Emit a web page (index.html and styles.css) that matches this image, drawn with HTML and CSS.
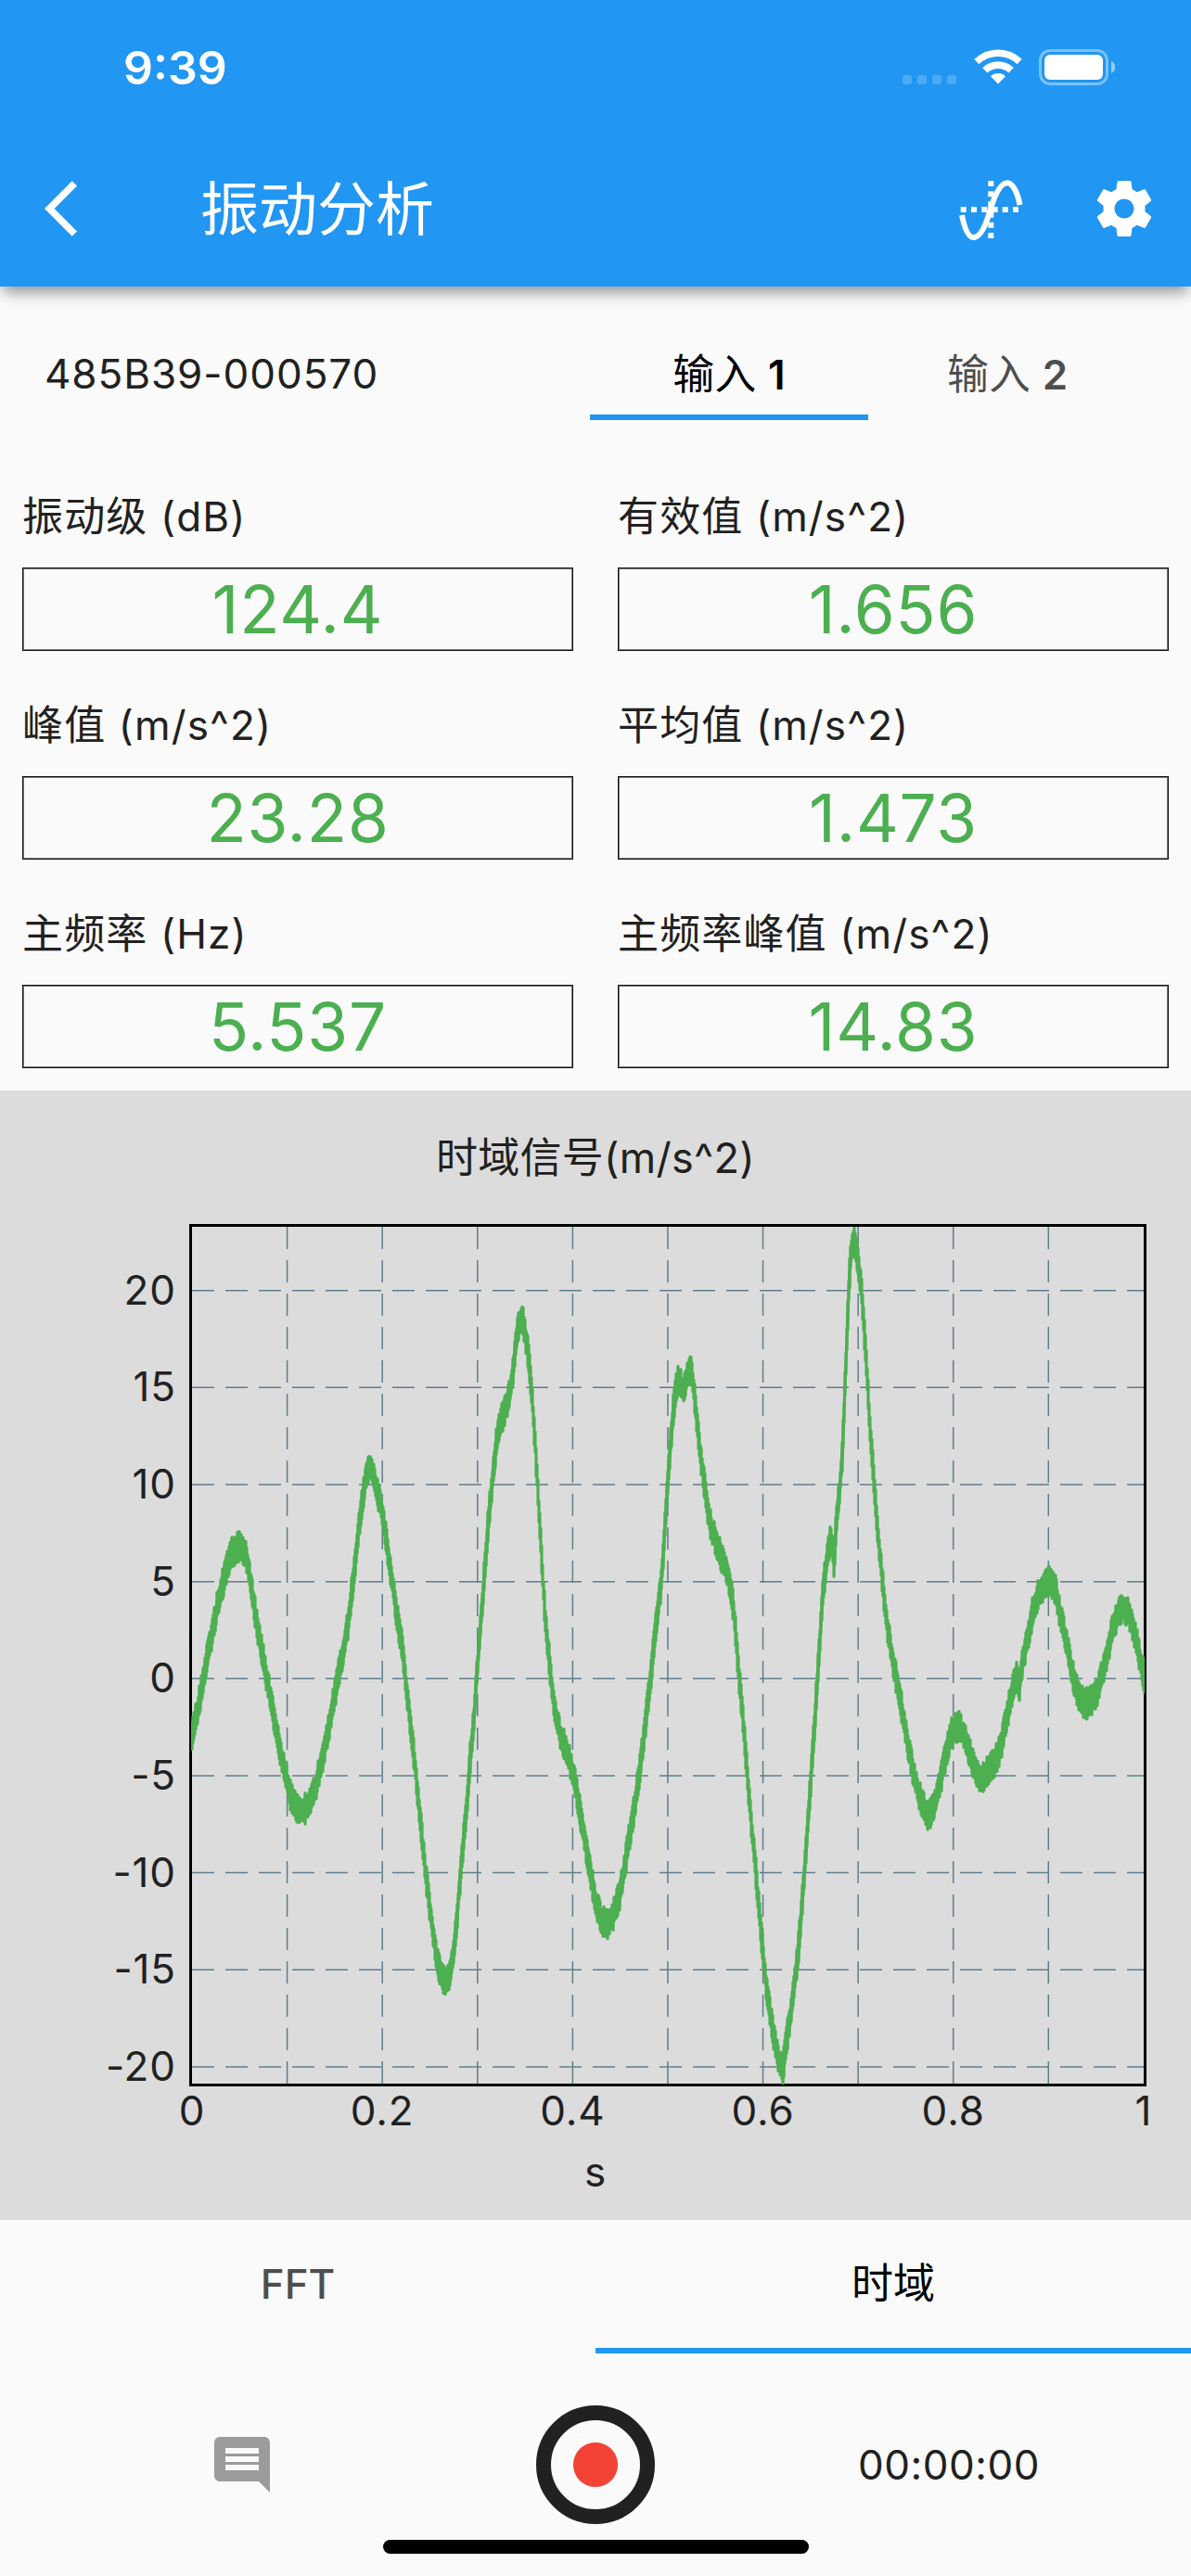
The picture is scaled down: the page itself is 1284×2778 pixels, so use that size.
FILE: index.html
```html
<!DOCTYPE html>
<html lang="zh-CN">
<head>
  <meta charset="UTF-8">
  <meta name="viewport" content="width=device-width, initial-scale=1.0">
  <title>振动分析</title>
  <link rel="stylesheet" href="styles.css">
</head>
<body>
  <header class="header">
    <div class="status-bar">
      <div class="clock">9:39</div>
      <div class="status-icons">
        <div class="signal"><i></i><i></i><i></i><i></i></div>
        <svg class="wifi" viewBox="0 0 52 38">
          <path d="M2.9 13.5A33.3 33.3 0 0 1 49.1 13.5" fill="none" stroke="#fff" stroke-width="7.4"/>
          <path d="M11.8 22.8A20.5 20.5 0 0 1 40.2 22.8" fill="none" stroke="#fff" stroke-width="7.6"/>
          <path d="M26 37.5L18 29.2A11.5 11.5 0 0 1 34 29.2Z" fill="#fff"/>
        </svg>
        <svg class="battery" viewBox="0 0 82 39">
          <rect x="1.5" y="1.5" width="72" height="36" rx="10.5" fill="none" stroke="#fff" stroke-opacity=".4" stroke-width="3"/>
          <rect x="6" y="6" width="63" height="27" rx="6" fill="#fff"/>
          <path d="M78 13a7 7 0 0 1 0 13z" fill="#fff" fill-opacity=".5"/>
        </svg>
      </div>
    </div>
    <div class="app-bar">
      <svg class="icon" viewBox="0 0 24 24"><path d="M11.67 3.87L9.9 2.1 0 12l9.9 9.9 1.77-1.77L3.54 12z"/></svg>
      <h1 class="page-title">振动分析</h1>
      <div class="actions">
        <svg class="icon" viewBox="0 0 72 72">
          <path d="M3.7 34h6v6h-6zM15 34h6v6h-6zM26.3 34h6v6h-6zM37.7 34h6v6h-6zM48.7 34h6v6h-6zM60 34h6v6h-6zM33.3 6h6v6h-6zM33.3 17.3h6v6h-6zM33.3 28.3h6v6h-6zM33.3 39.7h6v6h-6zM33.3 50.7h6v6h-6zM33.3 62h6v6h-6z"/>
          <path d="M5 43C8 58 12 67 17.5 67C26 67 32 50 36 36C41 20 47 8.3 54 8.3C60 8.3 65 19 67.5 32" fill="none" stroke="#fff" stroke-width="6"/>
        </svg>
        <svg class="icon" viewBox="0 0 24 24"><path d="M19.43 12.98c.04-.32.07-.64.07-.98s-.03-.66-.07-.98l2.11-1.65c.19-.15.24-.42.12-.64l-2-3.46c-.12-.22-.39-.3-.61-.22l-2.49 1c-.52-.4-1.08-.73-1.69-.98l-.38-2.65C14.46 2.18 14.25 2 14 2h-4c-.25 0-.46.18-.49.42l-.38 2.65c-.61.25-1.17.59-1.69.98l-2.49-1c-.23-.09-.49 0-.61.22l-2 3.46c-.13.22-.07.49.12.64l2.11 1.65c-.04.32-.07.65-.07.98s.03.66.07.98l-2.11 1.65c-.19.15-.24.42-.12.64l2 3.46c.12.22.39.3.61.22l2.49-1c.52.4 1.08.73 1.69.98l.38 2.65c.03.24.24.42.49.42h4c.25 0 .46-.18.49-.42l.38-2.65c.61-.25 1.17-.59 1.69-.98l2.49 1c.23.09.49 0 .61-.22l2-3.46c.12-.22.07-.49-.12-.64l-2.11-1.65zM12 15.5c-1.93 0-3.5-1.57-3.5-3.5s1.57-3.5 3.5-3.5 3.5 1.57 3.5 3.5-1.57 3.5-3.5 3.5z"/></svg>
      </div>
    </div>
  </header>

  <section class="device">
    <div class="serial">485B39-000570</div>
    <div class="input-tabs">
      <div class="tab active">输入 <b>1</b></div>
      <div class="tab">输入 <b>2</b></div>
    </div>
  </section>

  <section class="readings">
    <div class="reading">
      <div class="label">振动级 (dB)</div>
      <div class="value">124.4</div>
    </div>
    <div class="reading">
      <div class="label">有效值 (m/s^2)</div>
      <div class="value">1.656</div>
    </div>
    <div class="reading">
      <div class="label">峰值 (m/s^2)</div>
      <div class="value">23.28</div>
    </div>
    <div class="reading">
      <div class="label">平均值 (m/s^2)</div>
      <div class="value">1.473</div>
    </div>
    <div class="reading">
      <div class="label">主频率 (Hz)</div>
      <div class="value">5.537</div>
    </div>
    <div class="reading">
      <div class="label">主频率峰值 (m/s^2)</div>
      <div class="value">14.83</div>
    </div>
  </section>

  <section class="chart">
    <h2 class="chart-title">时域信号(m/s^2)</h2>
    <svg class="plot" viewBox="0 1320 1284 1074">
      <defs>
        <clipPath id="area"><rect x="206" y="1323" width="1028" height="925"/></clipPath>
      </defs>
      <g id="grid"></g>
      <rect class="frame" x="205.5" y="1321.5" width="1029" height="927"/>
      <path id="trace" clip-path="url(#area)"/>
      <g id="ticks"></g>
      <text class="tick middle" x="642" y="2357.5">s</text>
    </svg>
  </section>

  <nav class="view-tabs">
    <div class="tab"><b>FFT</b></div>
    <div class="tab active">时域</div>
  </nav>

  <footer class="recorder">
    <svg class="icon comment" viewBox="0 0 24 24"><path d="M21.99 4c0-1.1-.89-2-1.99-2H4c-1.1 0-2 .9-2 2v12c0 1.1.9 2 2 2h14l4 4-.01-18zM18 14H6v-2h12v2zm0-3H6V9h12v2zm0-3H6V6h12v2z"/></svg>
    <div class="record"></div>
    <div class="timer">00:00:00</div>
    <div class="home-indicator"></div>
  </footer>

  <script>
(function () {
  "use strict";

  const NS = "http://www.w3.org/2000/svg";
  const grid = document.querySelector("#grid");
  const ticks = document.querySelector("#ticks");

  // plot scale
  const px = (t) => 207 + 1025.9 * t;
  const py = (v) => 1810.3 - 20.93 * v;

  function add(parent, name, attrs, text) {
    const el = document.createElementNS(NS, name);
    for (const key in attrs) el.setAttribute(key, attrs[key]);
    if (text !== undefined) el.textContent = text;
    parent.appendChild(el);
  }

  for (let i = 1; i < 10; i++) {
    add(grid, "line", { x1: px(i / 10), x2: px(i / 10), y1: 1323, y2: 2247 });
  }
  for (let v = -20; v <= 20; v += 5) {
    add(grid, "line", { x1: 207, x2: 1233, y1: py(v), y2: py(v) });
    add(ticks, "text", { class: "tick end", x: 190, y: py(v) + 15 }, v);
  }
  for (let i = 0; i <= 10; i += 2) {
    add(ticks, "text", { class: "tick middle", x: px(i / 10), y: 2291.5 }, i / 10);
  }

  // signal centre line, x/y pairs in svg units
  const signal = [
    206,1874, 210.7,1855.7, 215,1834.7, 219.6,1809.4, 223.2,1786.3, 227.9,1765.3, 232.1,1744.2,
    235,1728.6, 240.4,1707, 245.4,1685.7, 250.7,1673, 257.1,1668, 263.6,1673, 267.9,1689,
    270.7,1710.7, 275,1738, 279.3,1765, 285.7,1799, 291,1828.4, 297,1862, 302.9,1891.5,
    308.2,1916.8, 313.6,1938, 319.6,1950, 325,1953, 332,1948, 338.6,1931.5, 344.6,1910.5,
    351,1879, 357.9,1843, 364.3,1809.4, 370.4,1778, 374.8,1754, 378.6,1721.4, 382,1693,
    385.7,1657, 390,1621.4, 394.3,1595, 399.3,1581, 403.6,1596.4, 409.3,1618, 414.3,1646.4,
    419,1678.6, 423.6,1710.7, 428.6,1747, 432.9,1771.6, 436.8,1807, 441,1845, 445.7,1887,
    450,1929.4, 454.3,1975.7, 458.2,2013.6, 462.5,2051.5, 467,2085, 471.4,2112.5, 475.7,2131.4,
    480.4,2138, 485,2129, 489.3,2102, 492.9,2064, 496.4,2022, 500,1980, 503.6,1942,
    507,1895.7, 510.7,1857.8, 514.3,1803, 518.4,1749, 522,1700, 526,1646.4, 530.4,1600,
    535,1557, 539.3,1534, 544.6,1521.4, 549.3,1503.6, 553.6,1475, 557,1442.9, 559.6,1428.6,
    562.9,1422, 566,1435.7, 569.6,1460.7, 573.2,1500, 576.8,1553.6, 580.4,1617.9, 583.6,1675,
    587.8,1745, 591.4,1782, 595,1820, 599.3,1849.4, 604.3,1872.6, 610,1885, 616,1906,
    621.4,1929.4, 626.8,1963, 632,1992.5, 637.5,2026, 642.9,2053.5, 648.2,2069, 653.6,2076,
    660.5,2067, 668,2043, 672.9,2017.8, 677.8,1984, 684.4,1946, 690,1908, 695.4,1862,
    701.6,1807, 707.6,1750, 711.9,1714, 715.2,1675, 718,1628.6, 720.5,1585.7, 723.4,1550,
    726.2,1517.9, 728.5,1500, 731.5,1488, 736.5,1499, 740.8,1486, 744.2,1474, 747.6,1496, 750.9,1528.6,
    754.2,1560.7, 757.9,1589, 762,1621.4, 766,1643, 771.4,1660.7, 777.6,1678.6, 783.7,1692.9,
    787.8,1710.7, 792.4,1751, 796,1799, 801,1853.6, 806.3,1921, 810.4,1971.5, 814.5,2013.6,
    818.6,2064, 822.8,2110, 826.9,2148, 831.8,2182, 837,2211, 841.2,2229, 844,2231,
    848.2,2198.8, 852.3,2173.5, 856.4,2139.8, 860.5,2106, 863.8,2064, 868,2009, 872,1950,
    876,1891.5, 880.7,1820, 885.3,1747, 887.6,1710.7, 891.3,1682, 895.4,1657, 897.9,1671,
    899,1692, 901,1650, 904.9,1610.7, 908,1571.4, 910,1521, 912.7,1450, 915.6,1378.6,
    917.6,1350, 920.5,1339, 924.2,1353.6, 928.3,1385.7, 931.6,1432, 934.9,1485.7, 938,1539,
    941.9,1592.9, 946,1650, 950.9,1700, 956,1749, 961,1782, 967.3,1815.8, 973.5,1849.4,
    980,1887, 987,1921, 994,1946, 1000.6,1959, 1006.7,1949, 1013.7,1921, 1019.9,1891.5,
    1026,1868, 1033.4,1861, 1040.4,1874.7, 1046.6,1893.6, 1052.7,1912.6, 1058,1918.9,
    1065,1910.5, 1073,1900, 1079.4,1881, 1085.6,1851.5, 1091.7,1822, 1096.7,1807, 1098.7,1822,
    1101,1799, 1106,1773.7, 1110.5,1754, 1113,1738, 1119.7,1717.9, 1125.4,1709, 1131.6,1703.6,
    1137.7,1714, 1143,1741, 1150.5,1775.8, 1156.6,1807, 1162.8,1829, 1169,1838, 1176,1834.7,
    1182,1826, 1188.3,1805, 1194.4,1780, 1200.6,1751, 1206.7,1737, 1212,1735, 1217,1739,
    1221,1752, 1226.4,1775.8, 1231.4,1799, 1235,1814
  ];

  // repeatable noise so the trace is the same on every load
  let seed = 39;
  function random() {
    seed = (seed * 16807) % 2147483647;
    return seed / 2147483647;
  }

  function drawTrace() {
    const points = [];
    let k = 0;
    for (let x = 206; x <= 1234; x += 1) {
      while (k < signal.length - 4 && signal[k + 2] < x) k += 2;
      const f = (x - signal[k]) / (signal[k + 2] - signal[k]);
      const y = signal[k + 1] + f * (signal[k + 3] - signal[k + 1]);
      const up = 8 + random() * 9;
      const down = 8 + random() * 9;
      points.push(x + "," + (y - up).toFixed(1), x + "," + (y + down).toFixed(1));
    }
    document.querySelector("#trace").setAttribute("d", "M" + points.join("L"));
  }

  drawTrace();
})();
  </script>
</body>
</html>
```
FILE: styles.css
```css
* {
  box-sizing: border-box;
}

body {
  margin: 0;
  width: 1284px;
  height: 2778px;
  display: flex;
  flex-direction: column;
  background-color: #fafafa;
  color: #212121;
  font-family: Inter, "Noto Sans CJK SC", sans-serif;
  font-size: 44px;
  line-height: 60px;
}

h1, h2 {
  margin: 0;
  font-weight: 400;
}

.icon {
  display: block;
  width: 72px;
  height: 72px;
  fill: #fff;
}

/* header */
.header {
  height: 309px;
  background-color: #2196f3;
  color: #fff;
  box-shadow: 0 9px 15px -3px rgba(0, 0, 0, 0.42);
}

.status-bar {
  height: 141px;
  display: flex;
  justify-content: space-between;
  padding: 43px 82px 0 133px;
}

.clock {
  font-size: 50px;
  font-weight: 600;
}

.status-icons {
  display: flex;
  align-items: flex-start;
  padding-top: 10px;
}

.signal {
  display: flex;
  gap: 6px;
  margin: 28px 19px 0 0;
}

.signal i {
  width: 10px;
  height: 10px;
  border-radius: 3px;
  background-color: rgba(255, 255, 255, 0.2);
}

.wifi {
  width: 52px;
  height: 38px;
  margin-right: 18px;
}

.battery {
  width: 82px;
  height: 39px;
}

.app-bar {
  height: 168px;
  display: flex;
  align-items: center;
  padding: 0 36px 0 48px;
}

.page-title {
  flex: 1;
  margin-left: 96px;
  font-size: 63px;
  line-height: 90px;
}

.actions {
  display: flex;
  gap: 72px;
}

/* device + inputs */
.device {
  display: flex;
  justify-content: space-between;
  height: 168px;
  padding: 45px 48px 24px;
}

.serial {
  line-height: 99px;
  letter-spacing: 0.95px;
}

.input-tabs {
  display: flex;
  width: 600px;
}

.tab {
  flex: 1;
  text-align: center;
  font-size: 45px;
  color: rgba(0, 0, 0, 0.7);
}

.tab b {
  font-size: 44px;
  font-weight: 600;
}

.tab.active {
  color: #000;
  box-shadow: inset 0 -6px #2196f3;
}

.input-tabs .tab {
  line-height: 99px;
}

/* readings */
.readings {
  display: grid;
  grid-template-columns: 1fr 1fr;
  column-gap: 48px;
  height: 699px;
  padding: 0 24px 24px;
}

.reading {
  height: 225px;
}

.label {
  height: 135px;
  padding-top: 50px;
  letter-spacing: 1.15px;
}

.value {
  height: 90px;
  border: 1px solid #111;
  box-shadow: inset 0 0 0 1px #777;
  text-align: center;
  font-size: 71px;
  line-height: 89px;
  letter-spacing: 0.8px;
  color: #4caf50;
}

/* chart */
.chart {
  height: 1218px;
  background-color: #dcdcdc;
}

.chart-title {
  height: 144px;
  padding-top: 43px;
  text-align: center;
  font-size: 45px;
  letter-spacing: 0.3px;
}

.plot {
  display: block;
  width: 1284px;
  height: 1074px;
}

#grid line {
  stroke: #607d8b;
  stroke-width: 1.5;
  stroke-dasharray: 24 12;
}

.frame {
  fill: none;
  stroke: #000;
  stroke-width: 3;
}

#trace {
  fill: none;
  stroke: #4caf50;
  stroke-width: 3.2;
  stroke-linejoin: round;
}

.tick {
  font-size: 44px;
  letter-spacing: 0.9px;
  fill: #212121;
}

.middle {
  text-anchor: middle;
}

.end {
  text-anchor: end;
}

/* FFT / time tabs */
.view-tabs {
  display: flex;
  height: 144px;
}

.view-tabs .tab {
  line-height: 138px;
}

.view-tabs b {
  font-weight: 500;
}

/* recorder */
.recorder {
  position: relative;
  flex: 1;
  display: grid;
  grid-template-columns: repeat(3, 381px);
  justify-content: center;
  align-items: center;
  justify-items: center;
}

.comment {
  fill: #9b9b9b;
}

.record {
  width: 128px;
  height: 128px;
  border-radius: 50%;
  border: 16px solid #212121;
  background: radial-gradient(circle, #f44336 23.5px, transparent 24.5px);
}

.timer {
  letter-spacing: 0.5px;
}

.home-indicator {
  position: absolute;
  left: 413px;
  bottom: 24px;
  width: 459px;
  height: 15px;
  border-radius: 8px;
  background-color: #000;
}
```
